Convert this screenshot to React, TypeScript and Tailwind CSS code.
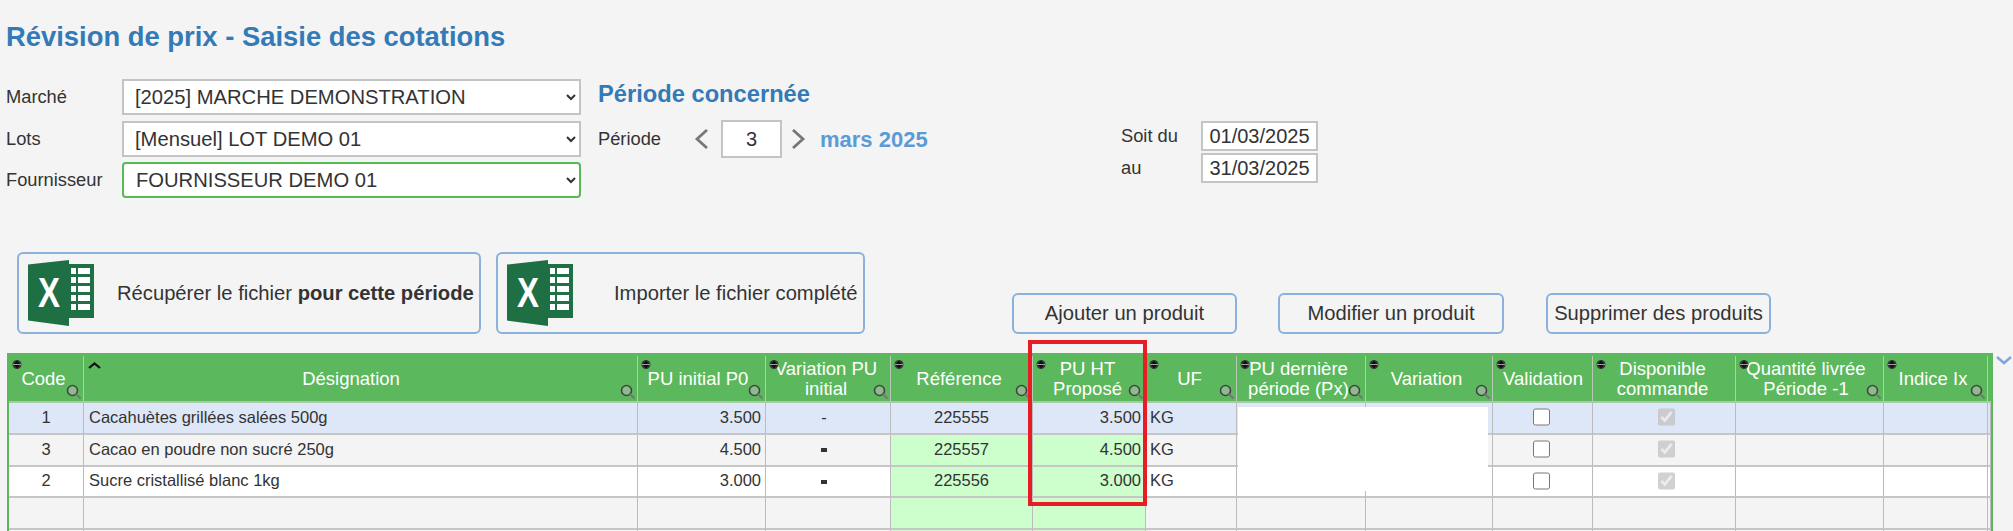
const columns = [
  { label: "Code", width: "w-[75px]", mag: true, pad: "pr-[6px]" },
  { label: "Désignation", width: "w-[554px]", mag: true, sortUp: true, pad: "pr-[20px]" },
  { label: "PU initial P0", width: "w-[128px]", mag: true, pad: "pr-[8px]" },
  { label: "Variation PU initial", width: "w-[125px]", mag: true, two: true, pad: "pr-[5px]" },
  { label: "Référence", width: "w-[142px]", mag: true, pad: "pr-[6px]" },
  { label: "PU HT Proposé", width: "w-[113px]", mag: true, two: true, pad: "pr-[4px]" },
  { label: "UF", width: "w-[91px]", mag: true, pad: "pr-[4px]" },
  { label: "PU dernière période (Px)", width: "w-[129px]", mag: true, two: true, pad: "pr-[6px]" },
  { label: "Variation", width: "w-[127px]", mag: true, pad: "pr-[6px]" },
  { label: "Validation", width: "w-[100px]", mag: false, pad: "pr-[0px]" },
  { label: "Disponible commande", width: "w-[143px]", mag: false, two: true, pad: "pr-[4px]" },
  { label: "Quantité livrée Période -1", width: "w-[148px]", mag: true, two: true, pad: "pr-[8px]" },
  { label: "Indice Ix", width: "w-[104px]", mag: true, pad: "pr-[6px]" },
];

const rows = [
  { code: "1", name: "Cacahuètes grillées salées 500g", p0: "3.500", bold: false, ref: "225555", pu: "3.500", bg: "bg-[#dde7f7]", green: false, h: "h-[32px]" },
  { code: "3", name: "Cacao en poudre non sucré 250g", p0: "4.500", bold: true, ref: "225557", pu: "4.500", bg: "bg-[#f4f4f4]", green: true, h: "h-[32px]" },
  { code: "2", name: "Sucre cristallisé blanc 1kg", p0: "3.000", bold: true, ref: "225556", pu: "3.000", bg: "bg-white", green: true, h: "h-[31px]" },
];

const btn = "rounded-[6px] border-2 border-[#8bb2dc] text-[20.200px]";

const SortIcon = () => (
  <svg width="10" height="11" viewBox="0 0 10 11" className="absolute left-[3px] top-[3px]">
    <circle cx="5" cy="5.500" r="4.500" fill="#3a3a3a" />
    <path d="M5 1.500 8 5H2zM5 9.500 2 6h6z" fill="#111" />
    <path d="M1 5.500h8" stroke="#bbb" strokeWidth="0.8" />
  </svg>
);

const SortUpIcon = () => (
  <svg width="13" height="7" viewBox="0 0 13 7" className="absolute left-[4px] top-[6px]">
    <path d="M1 6 6.500 1.500 12 6" fill="none" stroke="#111" strokeWidth="2.200" />
  </svg>
);

const MagIcon = () => (
  <svg width="16" height="16" viewBox="0 0 16 16" className="absolute right-[1px] bottom-[1px]">
    <circle cx="6.500" cy="6.500" r="5" fill="#8dbb8d" stroke="#444" strokeWidth="1.600" />
    <path d="M10 10l4.500 4.500" stroke="#777" strokeWidth="2" />
  </svg>
);

const ExcelIcon = () => (
  <svg width="66" height="67" viewBox="0 0 66 67" className="shrink-0">
    <rect x="40" y="4" width="26" height="54" fill="#1f7145" />
    <path d="M43 8h5v6h-5zM43 17h5v6h-5zM43 26h5v6h-5zM43 35h5v6h-5zM43 44h5v6h-5z" fill="#fff" />
    <path d="M50 8h12v6H50zM50 17h12v6H50zM50 26h12v6H50zM50 35h12v6H50zM50 44h12v6H50z" fill="#fff" />
    <path d="M0 4.500 41 0v66L0 60.500z" fill="#1e6f44" />
    <text
      x="10"
      y="47"
      textLength="22"
      lengthAdjust="spacingAndGlyphs"
      fontFamily="'Liberation Sans', sans-serif"
      fontWeight="700"
      fontSize="43"
      fill="#fff"
    >
      X
    </text>
  </svg>
);

const Chevron = ({ dir }: { dir: "left" | "right" }) => (
  <svg width="15" height="20" viewBox="0 0 15 20">
    <path
      d={dir === "left" ? "M13 1 3 10l10 9" : "M2 1l10 9-10 9"}
      fill="none"
      stroke="#777"
      strokeWidth="2.800"
    />
  </svg>
);

const Cell = ({ className = "", children }: { className?: string; children?: React.ReactNode }) => (
  <td className={`border-r border-b-2 border-r-[#bcbcbc] border-b-[#c6c6c6] p-0 ${className}`}>{children}</td>
);

export default function App() {
  return (
    <div className="relative h-[531px] w-[2013px] overflow-hidden bg-[#f4f4f4] font-['Liberation_Sans',Arial,sans-serif] text-[18.300px] text-[#333]">
      <h1 className="pl-[6px] pt-[22px] text-[27.400px] leading-[30px] font-bold text-[#337ab7]">
        Révision de prix - Saisie des cotations
      </h1>

      <div className="mt-[27px] flex pl-[6px]">
        <div className="flex flex-col gap-[5.500px]">
          {[
            { label: "Marché", value: "[2025] MARCHE DEMONSTRATION" },
            { label: "Lots", value: "[Mensuel] LOT DEMO 01" },
          ].map((s) => (
            <div key={s.label} className="flex items-center">
              <span className="w-[116px]">{s.label}</span>
              <select
                className="h-[36px] w-[459px] border-2 border-[#c4c4c4] bg-white pl-[7px] text-[20.200px] text-[#333]"
                defaultValue={s.value}
              >
                <option>{s.value}</option>
              </select>
            </div>
          ))}
          <div className="flex items-center">
            <span className="w-[116px]">Fournisseur</span>
            <select className="h-[36px] w-[459px] rounded-[4px] border-2 border-[#56bb56] bg-white pl-[8px] text-[20.200px] text-[#333]">
              <option>FOURNISSEUR DEMO 01</option>
            </select>
          </div>
        </div>

        <div className="ml-[17px] flex w-[523px] flex-col">
          <div className="h-[41px] pt-[1px] text-[23.700px] leading-[28px] font-bold text-[#337ab7]">Période concernée</div>
          <div className="flex h-[38px] items-center">
            <span className="w-[96px]">Période</span>
            <Chevron dir="left" />
            <input
              readOnly
              value="3"
              className="ml-[12px] h-[38px] w-[61px] border-2 border-[#c4c4c4] bg-white text-center text-[20px] text-[#333]"
            />
            <span className="ml-[9px]">
              <Chevron dir="right" />
            </span>
            <span className="ml-[14px] text-[22px] font-bold text-[#5b9bd5]">mars 2025</span>
          </div>
        </div>

        <div className="mt-[42px] flex flex-col gap-[2px]">
          {[
            { label: "Soit du", value: "01/03/2025" },
            { label: "au", value: "31/03/2025" },
          ].map((d) => (
            <div key={d.label} className="flex items-center">
              <span className="w-[80px]">{d.label}</span>
              <input
                readOnly
                value={d.value}
                className="h-[30px] w-[117px] border-2 border-[#c4c4c4] bg-white text-center text-[20px] text-[#333]"
              />
            </div>
          ))}
        </div>
      </div>

      <div className="mt-[54px] flex items-end pl-[17px]">
        <button className={`${btn} flex h-[82px] w-[464px] items-center pl-[9px]`}>
          <ExcelIcon />
          <span className="ml-[23px] whitespace-nowrap">
            Récupérer le fichier <b>pour cette période</b>
          </span>
        </button>
        <button className={`${btn} ml-[15px] flex h-[82px] w-[369px] items-center pl-[9px]`}>
          <ExcelIcon />
          <span className="ml-[41px] whitespace-nowrap">Importer le fichier complété</span>
        </button>
        <button className={`${btn} ml-[147px] h-[41px] w-[225px]`}>Ajouter un produit</button>
        <button className={`${btn} ml-[41px] h-[41px] w-[226px]`}>Modifier un produit</button>
        <button className={`${btn} ml-[42px] h-[41px] w-[225px]`}>Supprimer des produits</button>
      </div>

      <div className="mt-[19px] flex items-start pl-[7px]">
        <div className="w-[1986px] border-x-2 border-t-[3px] border-[#5cb85c]">
          <table className="w-[1982px] table-fixed border-separate border-spacing-0">
            <colgroup>
              {columns.map((c) => (
                <col key={c.label} className={c.width} />
              ))}
              <col className="w-[3px]" />
            </colgroup>
            <thead>
              <tr className="h-[47px] bg-[#5cb85c] text-white">
                {columns.map((c) => (
                  <th
                    key={c.label}
                    className={`relative border-r border-r-[#b5c9b5] border-b-2 border-b-[#a9c9a9] pl-[1px] text-center text-[18.500px] leading-[20px] font-normal ${c.pad}`}
                  >
                    {c.sortUp ? <SortUpIcon /> : <SortIcon />}
                    {c.label}
                    {c.mag && <MagIcon />}
                  </th>
                ))}
                <th className="border-b-2 border-b-[#a9c9a9]" />
              </tr>
            </thead>
            <tbody className="text-[16.500px]">
              {rows.map((r) => (
                <tr key={r.code} className={`${r.h} ${r.bg}`}>
                  <Cell className="pb-[2px] text-center">{r.code}</Cell>
                  <Cell className="pb-[2px] pl-[5px]">{r.name}</Cell>
                  <Cell className="pb-[2px] pr-[4px] text-right">{r.p0}</Cell>
                  <Cell className="pb-[2px] pr-[8px] text-center">
                    {r.bold ? <span className="inline-block h-[4px] w-[6px] bg-[#333] align-middle" /> : "-"}
                  </Cell>
                  <Cell className={`pb-[2px] text-center ${r.green ? "bg-[#ccffcc]" : ""}`}>{r.ref}</Cell>
                  <Cell className={`pb-[2px] pr-[4px] text-right ${r.green ? "bg-[#ccffcc]" : ""}`}>{r.pu}</Cell>
                  <Cell className="pb-[2px] pl-[4px]">KG</Cell>
                  <Cell />
                  <Cell />
                  <Cell className="pt-[5px] pr-[3px] text-center align-top">
                    <input type="checkbox" readOnly className="block mx-auto h-[18px] w-[17px]" />
                  </Cell>
                  <Cell className="pt-[5px] pl-[5px] text-center align-top">
                    <input type="checkbox" checked disabled readOnly className="block mx-auto h-[18px] w-[17px]" />
                  </Cell>
                  <Cell />
                  <Cell />
                  <Cell />
                </tr>
              ))}
              {["a", "b"].map((k) => (
                <tr key={k} className="h-[32px] bg-[#f4f4f4]">
                  {columns.map((c, i) => (
                    <Cell key={c.label} className={i === 4 || i === 5 ? "bg-[#ccffcc]" : ""} />
                  ))}
                  <Cell />
                </tr>
              ))}
            </tbody>
          </table>
        </div>
        <svg width="16" height="9" viewBox="0 0 16 9" className="mt-[3px] ml-[3px]">
          <path d="M1 1l7 6 7-6" fill="none" stroke="#7ea6e0" strokeWidth="2.500" />
        </svg>
      </div>

      <div className="absolute left-[1238px] top-[407px] h-[84px] w-[250px] bg-white" />
      <div className="absolute left-[1028px] top-[340px] h-[166px] w-[119px] border-[4px] border-[#e81c24]" />
    </div>
  );
}
